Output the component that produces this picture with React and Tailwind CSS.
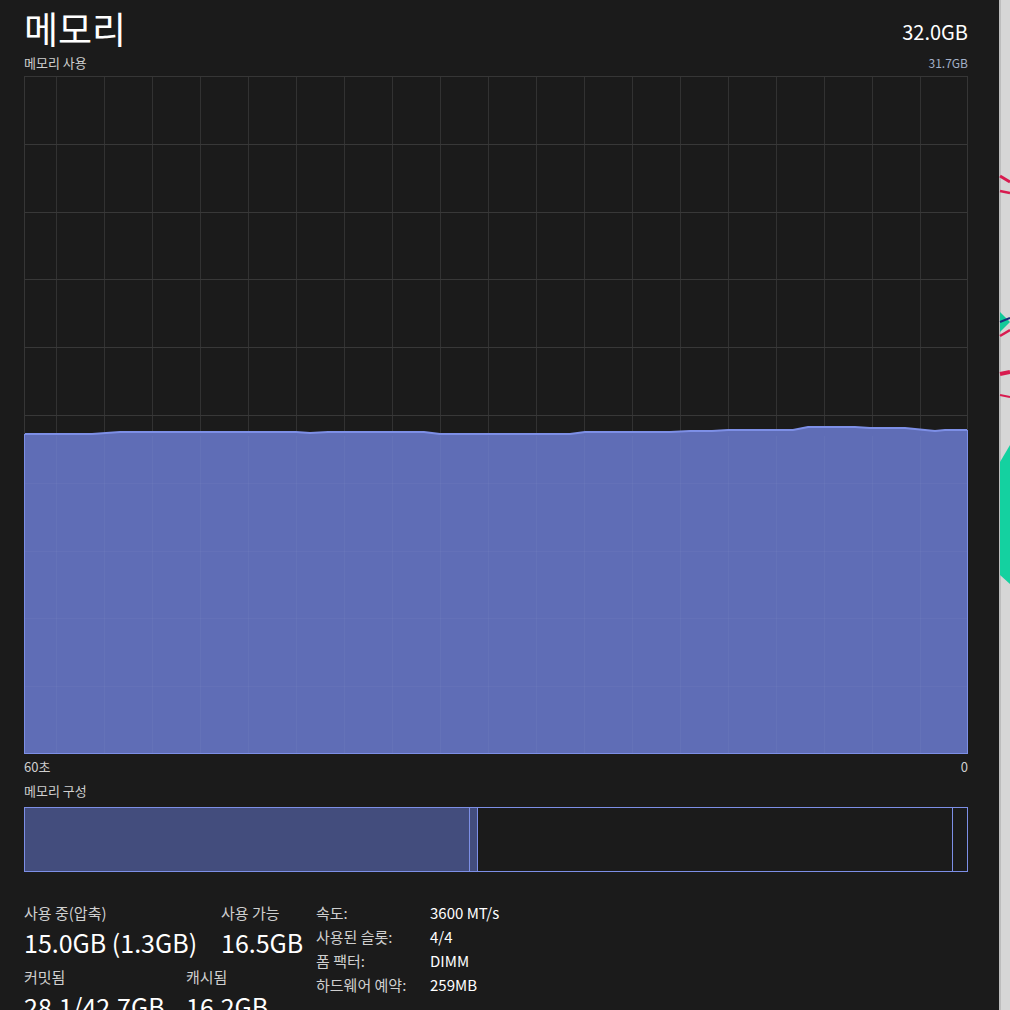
const points = [
  [24, 434], [92, 434], [120, 432], [296, 432], [310, 433], [328, 432], [424, 432],
  [440, 434], [570, 434], [585, 432], [670, 432], [690, 431], [712, 431], [728, 430],
  [793, 430], [808, 427], [855, 427], [870, 428], [905, 428], [935, 431], [945, 430], [968, 430],
];

const W = 944;
const H = 678;

function UsageChart() {
  const line = points.map(([x, y]) => `${x - 24},${y - 76}`).join(" ");
  const area = `0,${H} ${line} ${W},${H}`;
  const cols = Array.from({ length: 19 }, (_, k) => 32 + 48 * k);
  const rows = Array.from({ length: 9 }, (_, j) => Math.round((H / 10) * (j + 1)));

  return (
    <svg width={W} height={H} viewBox={`0 0 ${W} ${H}`} className="block">
      <rect x="0" y="0" width={W} height={H} fill="#1b1b1b" />
      {cols.map((x) => (
        <line key={"v" + x} x1={x + 0.5} y1="0" x2={x + 0.5} y2={H} stroke="#323232" />
      ))}
      {rows.map((y) => (
        <line key={"h" + y} x1="0" y1={y + 0.5} x2={W} y2={y + 0.5} stroke="#323232" />
      ))}
      <polygon points={area} fill="#5f6db6" />
      {cols.map((x) => (
        <line key={"f" + x} x1={x + 0.5} y1="360" x2={x + 0.5} y2={H} stroke="rgba(255,255,255,0.035)" />
      ))}
      {rows.map((y) => (
        <line key={"g" + y} x1="0" y1={y + 0.5} x2={W} y2={y + 0.5} stroke="rgba(255,255,255,0.03)" />
      ))}
      <polyline points={line} fill="none" stroke="#7d8fe6" strokeWidth="2" />
      <rect x="0.5" y="0.5" width={W - 1} height={H - 1} fill="none" stroke="#363636" />
      <line x1="0.5" y1="358" x2="0.5" y2={H} stroke="#7d8fe6" />
      <line x1={W - 0.5} y1="354" x2={W - 0.5} y2={H} stroke="#7d8fe6" />
      <line x1="0" y1={H - 0.5} x2={W} y2={H - 0.5} stroke="#7d8fe6" />
    </svg>
  );
}

function Wallpaper() {
  return (
    <svg width="11" height="1010" viewBox="0 0 11 1010" className="block">
      <rect width="11" height="1010" fill="#d6d6d6" />
      <rect width="2" height="1010" fill="#bdbdbd" />
      <line x1="1" y1="176" x2="11" y2="182" stroke="#d81b4f" strokeWidth="3" />
      <line x1="1" y1="191" x2="11" y2="193" stroke="#d81b4f" strokeWidth="2.5" />
      <polygon points="1,312 11,322 1,332" fill="#12c99a" />
      <line x1="1" y1="322" x2="11" y2="318" stroke="#1a2a7a" strokeWidth="2" />
      <line x1="1" y1="336" x2="11" y2="330" stroke="#d81b4f" strokeWidth="2.5" />
      <line x1="1" y1="374" x2="11" y2="372" stroke="#d81b4f" strokeWidth="4" />
      <line x1="1" y1="395" x2="11" y2="397" stroke="#d81b4f" strokeWidth="2" />
      <polygon points="11,445 1,462 1,575 11,584" fill="#14d1a0" />
    </svg>
  );
}

function Stat({ label, value, className = "" }) {
  return (
    <div className={className}>
      <div className="text-[15px] leading-[20px] text-[#cfcfcf]">{label}</div>
      <div className="text-[25px] leading-[32px] text-white mt-[3px] whitespace-nowrap">{value}</div>
    </div>
  );
}

const specs = [
  ["속도:", "3600 MT/s"],
  ["사용된 슬롯:", "4/4"],
  ["폼 팩터:", "DIMM"],
  ["하드웨어 예약:", "259MB"],
];

export default function App() {
  return (
    <div
      className="w-[1010px] h-[1010px] overflow-hidden flex bg-[#1b1b1b]"
      style={{ fontFamily: '"Noto Sans CJK KR", "Noto Sans", sans-serif' }}
    >
      <div className="w-[999px] h-full pl-[24px] pr-[31px] text-white">
        {/* Header */}
        <div className="flex items-end justify-between h-[52px]">
          <h1 className="text-[37px] leading-[48px] font-normal">메모리</h1>
          <span className="text-[20px] leading-[28px] mb-[6px]">32.0GB</span>
        </div>
        <div className="flex items-center justify-between h-[22px] text-[13px] text-[#cfcfcf]">
          <span>메모리 사용</span>
          <span className="text-[12px] text-[#a3b0c8]">31.7GB</span>
        </div>
        <div className="mt-[2px]">
          <UsageChart />
        </div>
        <div className="flex justify-between h-[26px] items-center text-[13px] text-[#cfcfcf]">
          <span>60초</span>
          <span>0</span>
        </div>
        <div className="h-[22px] flex items-center text-[13px] text-[#cfcfcf]">메모리 구성</div>
        {/* Composition */}
        <div className="mt-[5px] h-[65px] flex border border-[#7d8fe6]">
          <div className="w-[445px] bg-[#434d7d] border-r border-[#7d8fe6]" />
          <div className="w-[8px] bg-[#434d7d] border-r border-[#7d8fe6]" />
          <div className="flex-1 border-r border-[#7d8fe6]" />
          <div className="w-[14px]" />
        </div>
        {/* Stats */}
        <div className="flex mt-[31px]">
          <div className="w-[292px]">
            <div className="flex">
              <Stat label="사용 중(압축)" value="15.0GB (1.3GB)" className="w-[197px]" />
              <Stat label="사용 가능" value="16.5GB" />
            </div>
            <div className="flex mt-[9px]">
              <Stat label="커밋됨" value="28.1/42.7GB" className="w-[162px]" />
              <Stat label="캐시됨" value="16.2GB" />
            </div>
          </div>
          <div className="text-[15px] leading-[24px] text-[#cfcfcf] -mt-[2px]">
            {specs.map(([k, v]) => (
              <div key={k} className="flex">
                <span className="w-[114px]">{k}</span>
                <span className="text-white">{v}</span>
              </div>
            ))}
          </div>
        </div>
      </div>
      <Wallpaper />
    </div>
  );
}
